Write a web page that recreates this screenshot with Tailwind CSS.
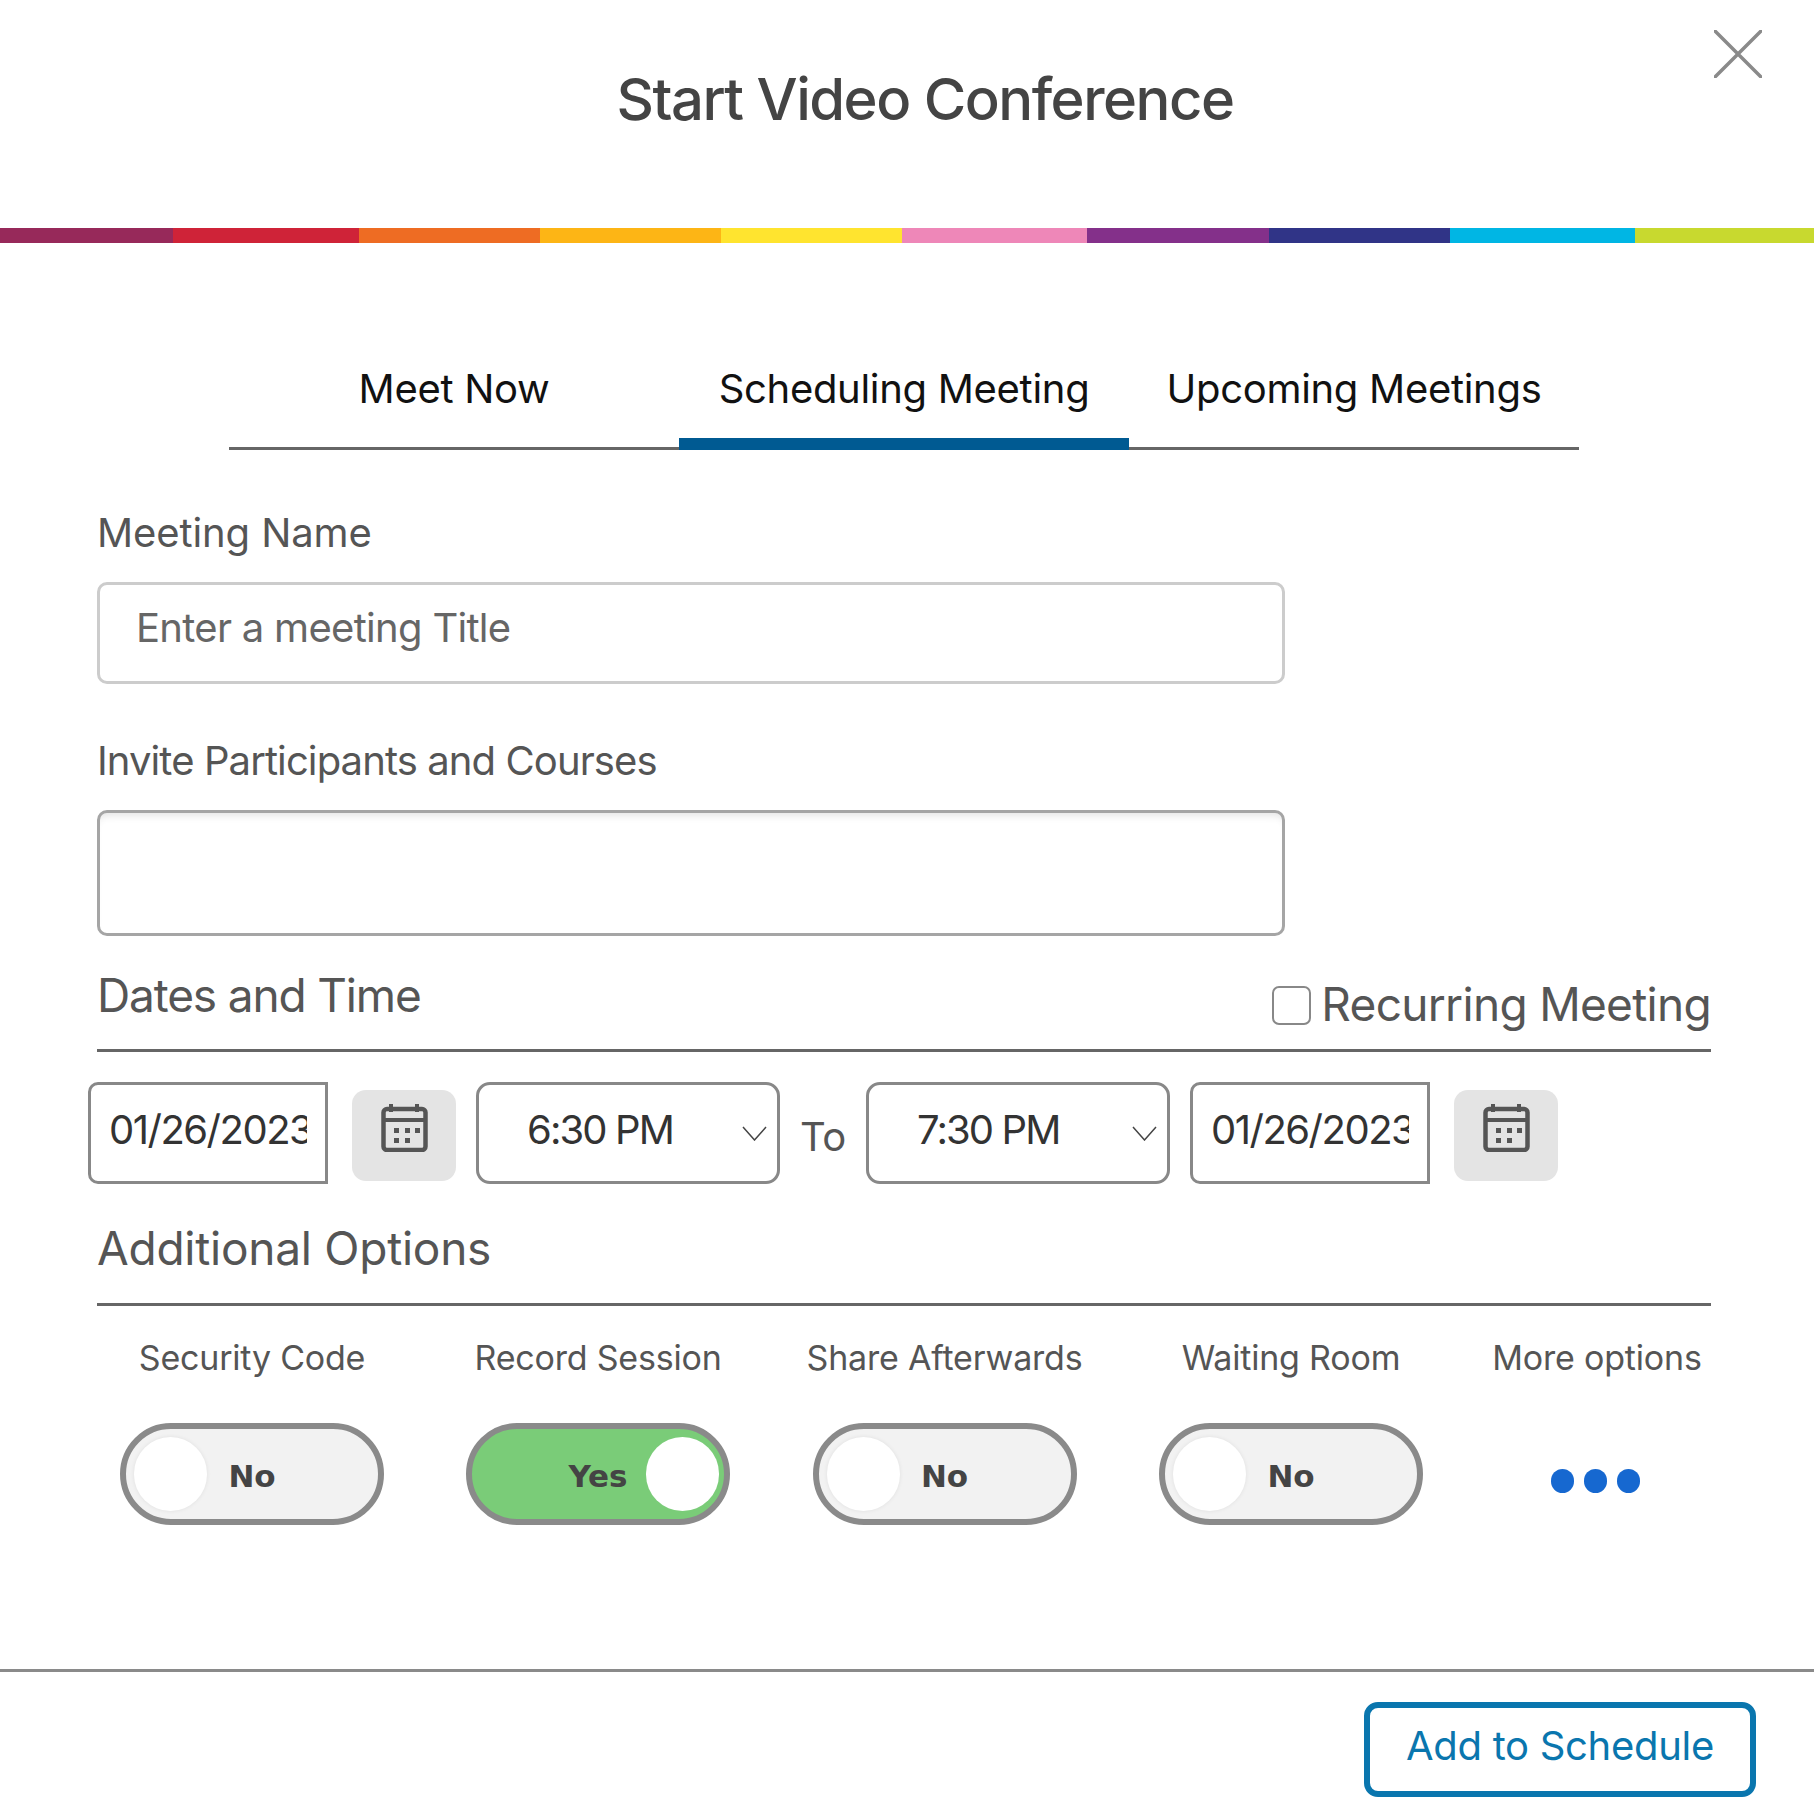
<!doctype html>
<html><head><meta charset="utf-8"><title>Start Video Conference</title>
<script src="https://cdn.jsdelivr.net/npm/@tailwindcss/browser@4"></script></head>
<body class="m-0 bg-white">
<div class="relative w-[1814px] h-[1820px] overflow-hidden bg-white [font-family:Inter,sans-serif] text-[#555]">
  <header class="h-[228px] pt-[69px] pl-[36px] text-center text-[58px] leading-[60px] font-medium text-[#444] tracking-[-1.5px]">Start Video Conference</header>
  <svg class="absolute left-[1714px] top-[30px]" width="48" height="48" viewBox="0 0 48 48"><path d="M0 0L48 48M48 0L0 48" stroke="#8a8a8a" stroke-width="3.5" fill="none"/></svg>
  <div class="flex h-[15px]">
    <div class="w-[173px] bg-[#97295a]"></div><div class="w-[186px] bg-[#cf2338]"></div><div class="w-[181px] bg-[#ee6c23]"></div><div class="w-[181px] bg-[#fdb515]"></div><div class="w-[181px] bg-[#ffe42f]"></div><div class="w-[185px] bg-[#ee87b8]"></div><div class="w-[182px] bg-[#84308a]"></div><div class="w-[181px] bg-[#303487]"></div><div class="w-[185px] bg-[#00b6e4]"></div><div class="w-[179px] bg-[#c8d92f]"></div>
  </div>
  <nav class="ml-[229px] flex w-[1350px] text-[40px] leading-[40px] text-[#111] tracking-[-0.3px]">
    <div class="w-[450px] h-[207px] pt-[126px] text-center border-b-[3px] border-[#666]">Meet Now</div>
    <div class="w-[450px] h-[207px] pt-[126px] text-center border-b-[12px] border-[#005a92]">Scheduling Meeting</div>
    <div class="w-[450px] h-[207px] pt-[126px] text-center border-b-[3px] border-[#666]">Upcoming Meetings</div>
  </nav>
  <main class="pl-[97px] w-[1711px]">
    <div class="mt-[63px] text-[40px] leading-[40px] tracking-[-0.1px]">Meeting Name</div>
    <div class="mt-[29px] w-[1188px] h-[102px] border-[3px] border-[#ccc] rounded-[10px] pl-[36px] pt-[23px] text-[40px] leading-[40px] text-[#666] tracking-[-0.7px]">Enter a meeting Title</div>
    <div class="mt-[57px] text-[40px] leading-[40px] tracking-[-0.9px]">Invite Participants and Courses</div>
    <div class="mt-[29px] w-[1188px] h-[126px] border-[3px] border-[#a5a5a5] rounded-[10px] shadow-[inset_0_8px_8px_-6px_rgba(0,0,0,0.12)]"></div>

    <div class="mt-[29px] h-[87px] flex justify-between items-start border-b-[3px] border-[#666]">
      <div class="mt-[7px] text-[46px] leading-[46px] tracking-[-1.15px]">Dates and Time</div>
      <div class="mt-[17px] flex items-center gap-[10px]">
        <div class="mt-[2px] w-[39px] h-[39px] border-2 border-[#888] rounded-[7px]"></div>
        <div class="text-[46px] leading-[44px] tracking-[-0.7px]">Recurring Meeting</div>
      </div>
    </div>

    <div class="mt-[30px] -ml-[9px] flex items-start text-[40px] leading-[40px] text-[#333]">
      <div class="w-[240px] h-[102px] border-[3px] border-[#888] rounded-l-[10px] pl-[18px] pt-[25px]"><div class="w-[198px] overflow-hidden whitespace-nowrap tracking-[-1.5px]">01/26/2023</div></div>
      <div class="ml-[24px] mt-[8px] w-[104px] h-[91px] rounded-[14px] bg-[#e4e4e4] flex justify-center pt-[14px]">
        <svg class="ml-[1px]" width="47" height="48" viewBox="0 0 47 48"><rect x="2.5" y="5" width="42" height="41" rx="3.5" fill="none" stroke="#555" stroke-width="4.5"/><path d="M2 16h43" stroke="#555" stroke-width="4"/><path d="M10 0v8M36 0v8" stroke="#555" stroke-width="4"/><path d="M13 24h5v5h-5zM24 24h5v5h-5zM34 24h5v5h-5zM13 34h5v5h-5zM24 34h5v5h-5z" fill="#555"/></svg>
      </div>
      <div class="relative ml-[20px] w-[304px] h-[102px] border-[3px] border-[#888] rounded-[14px] pl-[48px] pt-[25px] tracking-[-1.9px]">6:30 PM
        <svg class="absolute left-[263px] top-[41px]" width="25" height="15" viewBox="0 0 25 15"><path d="M1 1L12.5 14L24 1" fill="none" stroke="#444" stroke-width="1.5"/></svg>
      </div>
      <div class="ml-[20px] mt-[35px] w-[46px] text-[#555] tracking-[-0.5px]">To</div>
      <div class="relative ml-[20px] w-[304px] h-[102px] border-[3px] border-[#888] rounded-[14px] pl-[48px] pt-[25px] tracking-[-1.9px]">7:30 PM
        <svg class="absolute left-[263px] top-[41px]" width="25" height="15" viewBox="0 0 25 15"><path d="M1 1L12.5 14L24 1" fill="none" stroke="#444" stroke-width="1.5"/></svg>
      </div>
      <div class="ml-[20px] w-[240px] h-[102px] border-[3px] border-[#888] rounded-l-[10px] pl-[18px] pt-[25px]"><div class="w-[198px] overflow-hidden whitespace-nowrap tracking-[-1.5px]">01/26/2023</div></div>
      <div class="ml-[24px] mt-[8px] w-[104px] h-[91px] rounded-[14px] bg-[#e4e4e4] flex justify-center pt-[14px]">
        <svg class="ml-[1px]" width="47" height="48" viewBox="0 0 47 48"><rect x="2.5" y="5" width="42" height="41" rx="3.5" fill="none" stroke="#555" stroke-width="4.5"/><path d="M2 16h43" stroke="#555" stroke-width="4"/><path d="M10 0v8M36 0v8" stroke="#555" stroke-width="4"/><path d="M13 24h5v5h-5zM24 24h5v5h-5zM34 24h5v5h-5zM13 34h5v5h-5zM24 34h5v5h-5z" fill="#555"/></svg>
      </div>
    </div>

    <div class="mt-[41px] pb-[32px] border-b-[3px] border-[#666] text-[46px] leading-[46px] tracking-[-0.25px]">Additional Options</div>

    <div class="-ml-[18px] flex text-[34px] leading-[40px] tracking-[-0.2px]">
      <div class="w-[346px] shrink-0 pt-[32px] flex flex-col items-center">
        <div>Security Code</div>
        <div class="relative mt-[45px] w-[264px] h-[102px] border-[6px] border-[#8a8a8a] rounded-full bg-[#f2f2f2] flex items-center justify-center pt-[3px] [font-family:'DejaVu_Sans',sans-serif] font-bold text-[31px] tracking-normal text-[#444]">
          <span class="absolute left-[8px] top-[8px] w-[73px] h-[74px] rounded-full bg-white shadow-[0_0_4px_rgba(0,0,0,0.08)]"></span>No</div>
      </div>
      <div class="w-[346px] shrink-0 pt-[32px] flex flex-col items-center">
        <div>Record Session</div>
        <div class="relative mt-[45px] w-[264px] h-[102px] border-[6px] border-[#8a8a8a] rounded-full bg-[#7acc78] flex items-center justify-center pt-[3px] [font-family:'DejaVu_Sans',sans-serif] font-bold text-[31px] tracking-normal text-[#444]">
          <span class="absolute right-[5px] top-[8px] w-[73px] h-[74px] rounded-full bg-white"></span>Yes</div>
      </div>
      <div class="w-[347px] shrink-0 pt-[32px] flex flex-col items-center">
        <div>Share Afterwards</div>
        <div class="relative mt-[45px] w-[264px] h-[102px] border-[6px] border-[#8a8a8a] rounded-full bg-[#f2f2f2] flex items-center justify-center pt-[3px] [font-family:'DejaVu_Sans',sans-serif] font-bold text-[31px] tracking-normal text-[#444]">
          <span class="absolute left-[8px] top-[8px] w-[73px] h-[74px] rounded-full bg-white shadow-[0_0_4px_rgba(0,0,0,0.08)]"></span>No</div>
      </div>
      <div class="w-[346px] shrink-0 pt-[32px] flex flex-col items-center">
        <div>Waiting Room</div>
        <div class="relative mt-[45px] w-[264px] h-[102px] border-[6px] border-[#8a8a8a] rounded-full bg-[#f2f2f2] flex items-center justify-center pt-[3px] [font-family:'DejaVu_Sans',sans-serif] font-bold text-[31px] tracking-normal text-[#444]">
          <span class="absolute left-[8px] top-[8px] w-[73px] h-[74px] rounded-full bg-white shadow-[0_0_4px_rgba(0,0,0,0.08)]"></span>No</div>
      </div>
      <div class="w-[266px] shrink-0 pt-[32px] flex flex-col items-center">
        <div>More options</div>
        <div class="mt-[91px] mr-[4px] flex gap-[10px]">
          <span class="w-[23px] h-[24px] rounded-full bg-[#1668d0]"></span><span class="w-[23px] h-[24px] rounded-full bg-[#1668d0]"></span><span class="w-[23px] h-[24px] rounded-full bg-[#1668d0]"></span>
        </div>
      </div>
    </div>
  </main>
  <footer class="mt-[144px] border-t-[3px] border-[#8a8a8a] pt-[30px] pr-[58px] flex justify-end">
    <div class="w-[392px] h-[95px] border-[6px] border-[#0a76ae] rounded-[14px] pb-[8px] flex items-center justify-center text-[40px] leading-[40px] text-[#0a76ae] tracking-[-0.3px]">Add to Schedule</div>
  </footer>
</div>
</body></html>
